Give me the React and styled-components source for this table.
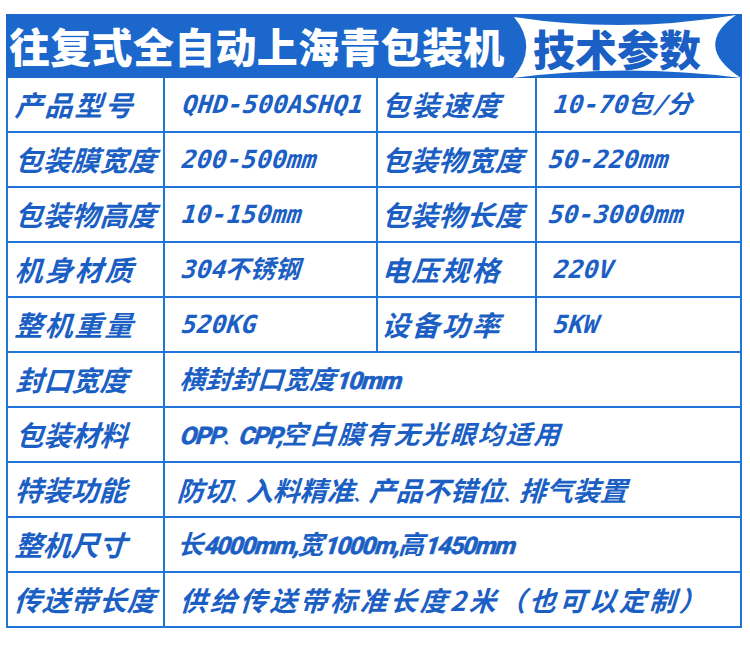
import React from "react";
import styled, { createGlobalStyle } from "styled-components";

const Global = createGlobalStyle`
  html, body { margin: 0; padding: 0; background: #ffffff; }
  body { font-family: "Noto Sans CJK SC", "Noto Sans", sans-serif; }
`;

const BLUE = "#1b67cc";
const LINE = "#2175d8";
const TEXT = "#1c5fc4";

const Page = styled.div`
  width: 750px;
  height: 645px;
  padding: 14px 8px 0 6px;
  box-sizing: border-box;
`;

const Banner = styled.div`
  height: 64px;
  background: ${BLUE};
  display: flex;
  align-items: center;
  padding-left: 3px;
`;

const Title = styled.div`
  color: #ffffff;
  font-family: "Noto Sans CJK SC", sans-serif;
  font-weight: 900;
  font-size: 41px;
  line-height: 1;
  letter-spacing: 0.3px;
  white-space: nowrap;
  margin-top: -2px;
`;

const Badge = styled.div`
  position: relative;
  margin-left: auto;
  width: 230px;
  height: 64px;
  display: flex;
  align-items: center;
  justify-content: center;
  padding-right: 20px;
  box-sizing: border-box;
`;

const BadgeShape = styled.svg`
  position: absolute;
  inset: 0;
`;

const BadgeText = styled.span`
  position: relative;
  color: ${TEXT};
  font-family: "Noto Sans CJK SC", sans-serif;
  font-weight: 900;
  font-size: 42px;
  line-height: 1;
  margin-top: 4px;
`;

const Table = styled.div`
  display: grid;
  grid-template-columns: 157px 213px 159px 203px;
  border-left: 2px solid ${LINE};
  border-right: 2px solid ${LINE};
`;

const Cell = styled.div`
  height: 55px;
  box-sizing: border-box;
  border-bottom: 2px solid ${LINE};
  border-right: ${(p) => (p.$last ? "none" : `2px solid ${LINE}`)};
  grid-column: ${(p) => (p.$span ? `span ${p.$span}` : "auto")};
  display: flex;
  align-items: center;
  padding-left: ${(p) => p.$pad}px;
  padding-bottom: 1px;
  color: ${TEXT};
  white-space: nowrap;
`;

const Slanted = styled.div`
  display: block;
  transform: skewX(-17deg);
  transform-origin: 50% 50%;
  line-height: 1;
`;

const Label = styled(Slanted)`
  font-family: "Noto Sans CJK SC", sans-serif;
  font-weight: 700;
  font-size: 28px;
  letter-spacing: ${(p) => p.$ls ?? 1}px;
`;

const Mono = styled(Slanted)`
  font-family: "DejaVu Sans Mono", "Noto Sans CJK SC", monospace;
  font-weight: 700;
  font-size: 25px;
`;

const Wide = styled(Slanted)`
  font-family: "Noto Sans CJK SC", sans-serif;
  font-weight: 700;
  font-size: ${(p) => p.$size ?? 26}px;
  letter-spacing: ${(p) => p.$ls ?? 0}px;
`;

const Num = styled.span`
  font-family: "Liberation Sans Narrow", "Roboto", sans-serif;
  font-weight: 700;
  font-size: 24px;
  letter-spacing: -1.2px;
  -webkit-text-stroke: 0.7px currentColor;
`;

const Comma = styled.span`
  font-size: ${(p) => p.$size ?? 15}px;
  letter-spacing: 0;
`;

const pairRows = [
  ["产品型号", "QHD-500ASHQ1", "包装速度", "10-70包/分", 16, 15],
  ["包装膜宽度", "200-500mm", "包装物宽度", "50-220mm", 15, 10],
  ["包装物高度", "10-150mm", "包装物长度", "50-3000mm", 15, 10],
  ["机身材质", "304不锈钢", "电压规格", "220V", 15, 15],
  ["整机重量", "520KG", "设备功率", "5KW", 15, 15],
];

export default function App() {
  return (
    <>
      <Global />
      <Page>
        <Banner>
          <Title>往复式全自动上海青包装机</Title>
          <Badge>
            <BadgeShape width="230" height="64" viewBox="0 0 230 64">
              <path
                d="M2,3 Q112,20 224,1 Q180,32 229,64 Q115,49 1,64 Q27,33 2,3 Z"
                fill="#ffffff"
              />
            </BadgeShape>
            <BadgeText>技术参数</BadgeText>
          </Badge>
        </Banner>
        <Table>
          {pairRows.map(([l1, v1, l2, v2, p2, p4]) => (
            <React.Fragment key={l1}>
              <Cell $pad={10}>
                <Label $ls={l1.length > 4 ? 0.3 : 2}>{l1}</Label>
              </Cell>
              <Cell $pad={p2 + 2}>
                <Mono>{v1}</Mono>
              </Cell>
              <Cell $pad={7}>
                <Label $ls={l2.length > 4 ? 0.3 : 2}>{l2}</Label>
              </Cell>
              <Cell $pad={p4 + 2} $last>
                <Mono>{v2}</Mono>
              </Cell>
            </React.Fragment>
          ))}

          <Cell $pad={11}>
            <Label $ls={0}>封口宽度</Label>
          </Cell>
          <Cell $pad={17} $span={3} $last>
            <Wide>
              横封封口宽度<Num>10mm</Num>
            </Wide>
          </Cell>

          <Cell $pad={11}>
            <Label $ls={0}>包装材料</Label>
          </Cell>
          <Cell $pad={17} $span={3} $last>
            <Wide $ls={2}>
              <Num>OPP</Num>
              <Comma>、</Comma>
              <Num>CPP,</Num>空白膜有无光眼均适用
            </Wide>
          </Cell>

          <Cell $pad={10}>
            <Label $ls={0}>特装功能</Label>
          </Cell>
          <Cell $pad={15} $span={3} $last>
            <Wide $size={27}>
              防切<Comma>、</Comma>入料精准<Comma>、</Comma>产品不错位<Comma>、</Comma>排气装置
            </Wide>
          </Cell>

          <Cell $pad={10}>
            <Label $ls={0}>整机尺寸</Label>
          </Cell>
          <Cell $pad={15} $span={3} $last>
            <Wide>
              长<Num>4000mm,</Num>宽<Num>1000m,</Num>高<Num>1450mm</Num>
            </Wide>
          </Cell>

          <Cell $pad={9}>
            <Label $ls={0.3}>传送带长度</Label>
          </Cell>
          <Cell $pad={18} $span={3} $last>
            <Wide $size={27} $ls={3}>
              供给传送带标准长度2米（也可以定制）
            </Wide>
          </Cell>
        </Table>
      </Page>
    </>
  );
}
